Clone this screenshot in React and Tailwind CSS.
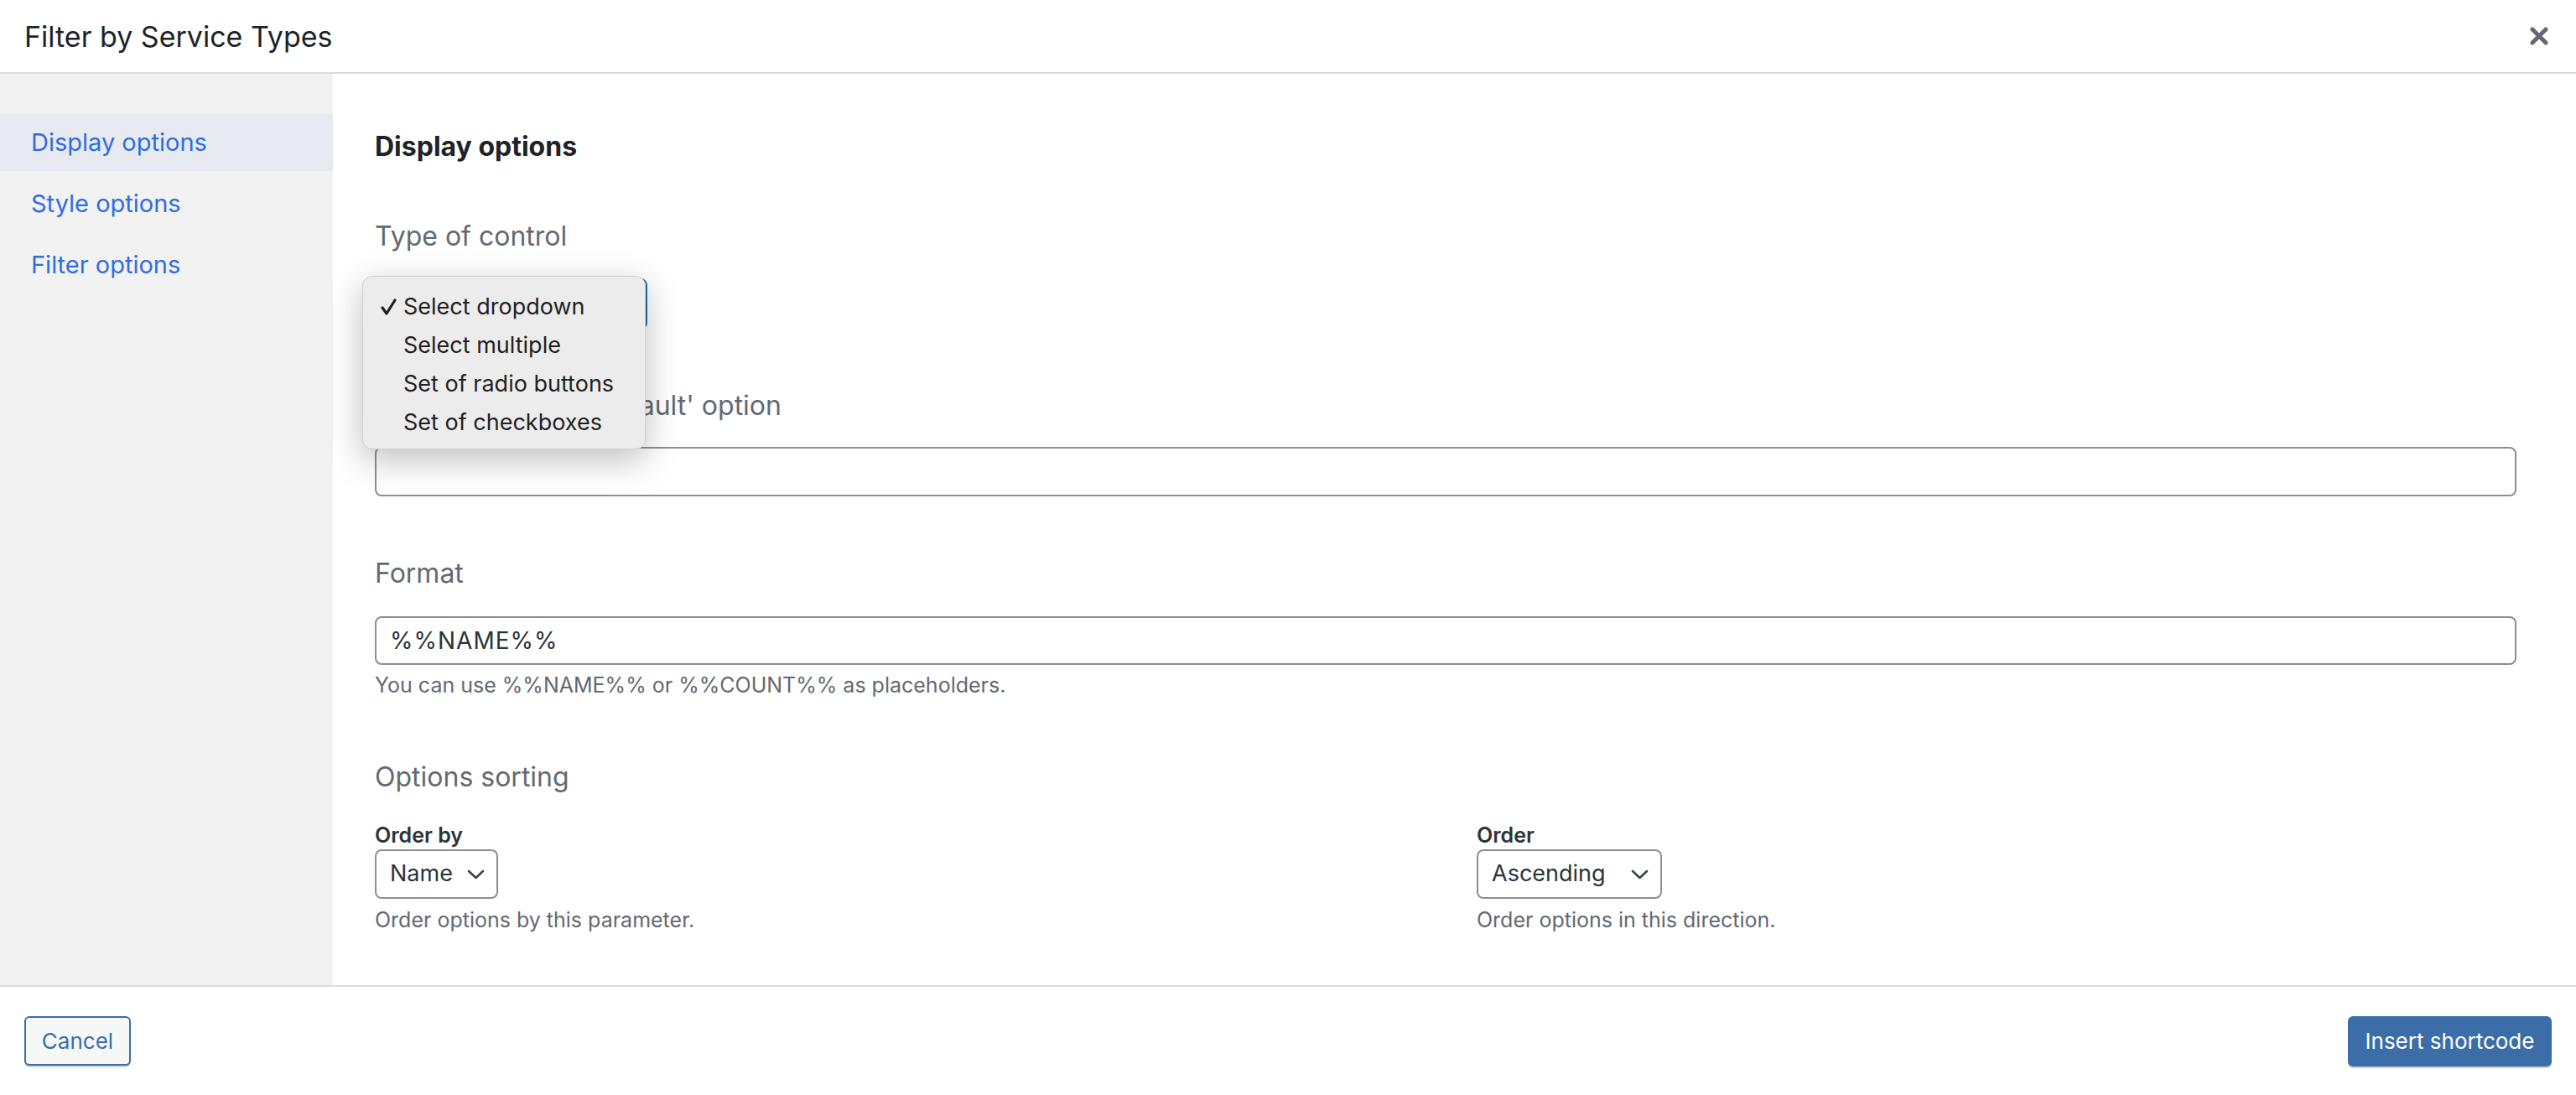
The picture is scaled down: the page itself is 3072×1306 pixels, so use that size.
import React, { useState } from "react";

const sections = ["Display options", "Style options", "Filter options"];
const controlTypes = [
  "Select dropdown",
  "Select multiple",
  "Set of radio buttons",
  "Set of checkboxes",
];

const Chevron = () => (
  <svg width="21" height="12" viewBox="0 0 21 12" fill="none">
    <path d="M2 2l8.5 8 8.5-8" stroke="#3c434a" strokeWidth="2.6" strokeLinecap="round" strokeLinejoin="round" />
  </svg>
);

const SelectBox = ({ value, width }) => (
  <div
    className={`flex h-[59px] items-center justify-between rounded-[8px] border-2 border-[#8c8f94] bg-white pl-[16px] pr-[14px] text-[27px] text-[#2c3338] ${width}`}
  >
    <span>{value}</span>
    <Chevron />
  </div>
);

const Label = ({ children, className = "" }) => (
  <div className={`text-[32px] leading-[40px] text-[#646970] ${className}`}>{children}</div>
);

const Help = ({ children, className = "" }) => (
  <p className={`text-[25px] leading-[32px] text-[#646970] ${className}`}>{children}</p>
);

export default function App() {
  const [active, setActive] = useState(0);

  return (
    <div className="flex h-screen flex-col bg-white font-['Inter',sans-serif]">
      {/* header */}
      <div className="flex h-[88px] shrink-0 items-center justify-between border-b-2 border-[#dcdcde] pl-[29px] pr-[32px]">
        <h1 className="text-[34px] text-[#1d2327]">Filter by Service Types</h1>
        <button className="flex h-[24px] w-[24px] items-center justify-center">
          <svg width="22" height="22" viewBox="0 0 22 22">
            <path d="M3 3l16 16M19 3L3 19" stroke="#646970" strokeWidth="5" strokeLinecap="round" />
          </svg>
        </button>
      </div>

      <div className="flex min-h-0 flex-1">
        {/* sidebar */}
        <nav className="flex w-[397px] shrink-0 flex-col gap-[5px] bg-[#f2f2f2] pt-[48px]">
          {sections.map((s, i) => (
            <button
              key={s}
              onClick={() => setActive(i)}
              className={`flex h-[68px] items-center pl-[37px] text-left text-[29px] text-[#2f6de1] ${
                active === i ? "bg-[#e8eaf1]" : ""
              }`}
            >
              {s}
            </button>
          ))}
        </nav>

        {/* panel */}
        <main className="flex-1 pl-[50px] pr-[71px] pt-[67px]">
          <h2 className="text-[32px] font-bold leading-[40px] text-[#1d2327]">Display options</h2>

          <Label className="mt-[67px]">Type of control</Label>
          <div className="relative mt-[30px] w-[325px]">
            <div className="h-[61px] rounded-[8px] border-2 border-[#2271b1] bg-white" />
            {/* native select menu, open */}
            <div className="absolute left-[-15px] top-[-3px] z-10 w-[338px] rounded-[12px] border border-[#cfcfcf] bg-[#ececec] pb-[8px] pt-[13px] shadow-[0_12px_40px_rgba(0,0,0,0.26)]">
              {controlTypes.map((t, i) => (
                <div key={t} className="flex h-[46px] items-center text-[27px] text-[#1f1f1f]">
                  <span className="flex w-[48px] justify-end pr-[8px]">
                    {i === 0 && (
                      <svg width="19" height="20" viewBox="0 0 19 20" fill="none">
                        <path d="M2 11l5 7L17 2" stroke="#1f1f1f" strokeWidth="3.2" strokeLinecap="round" strokeLinejoin="round" />
                      </svg>
                    )}
                  </span>
                  {t}
                </div>
              ))}
            </div>
          </div>

          <Label className="mt-[71px]">
            <span className="inline-block overflow-hidden align-top tracking-[-0.45px]">Label for the first 'def</span>ault' option
          </Label>
          <input className="mt-[29px] block h-[59px] w-full rounded-[8px] border-2 border-[#8c8f94] px-[16px] text-[27px] text-[#2c3338] outline-none" />

          <Label className="mt-[72px]">Format</Label>
          <input
            defaultValue="%%NAME%%"
            className="mt-[31px] block h-[58px] w-full rounded-[8px] border-2 border-[#8c8f94] px-[16px] text-[28px] tracking-[1px] text-[#2c3338] outline-none"
          />
          <Help className="mt-[8px]">You can use %%NAME%% or %%COUNT%% as placeholders.</Help>

          <Label className="mt-[74px]">Options sorting</Label>
          <div className="mt-[33px] grid grid-cols-2 gap-x-[74px]">
            <div>
              <div className="text-[25px] font-semibold leading-[32px] text-[#2c3338]">Order by</div>
              <div className="mt-[1px]">
                <SelectBox value="Name" width="w-[147px]" />
              </div>
              <Help className="mt-[9px]">Order options by this parameter.</Help>
            </div>
            <div>
              <div className="text-[25px] font-semibold leading-[32px] text-[#2c3338]">Order</div>
              <div className="mt-[1px]">
                <SelectBox value="Ascending" width="w-[221px]" />
              </div>
              <Help className="mt-[9px]">Order options in this direction.</Help>
            </div>
          </div>
        </main>
      </div>

      {/* footer */}
      <div className="flex h-[131px] shrink-0 items-center justify-between border-t-2 border-[#dcdcde] px-[29px]">
        <button className="h-[59px] w-[127px] rounded-[6px] border-2 border-[#3a6ea8] bg-[#f6f7f7] text-[26px] text-[#3a6ea8] shadow-[0_2px_1px_rgba(0,0,0,0.18)]">
          Cancel
        </button>
        <button className="h-[60px] w-[243px] rounded-[6px] bg-[#3b6ea9] text-[26px] text-white shadow-[0_2px_1px_rgba(0,0,0,0.2)]">
          Insert shortcode
        </button>
      </div>
    </div>
  );
}
